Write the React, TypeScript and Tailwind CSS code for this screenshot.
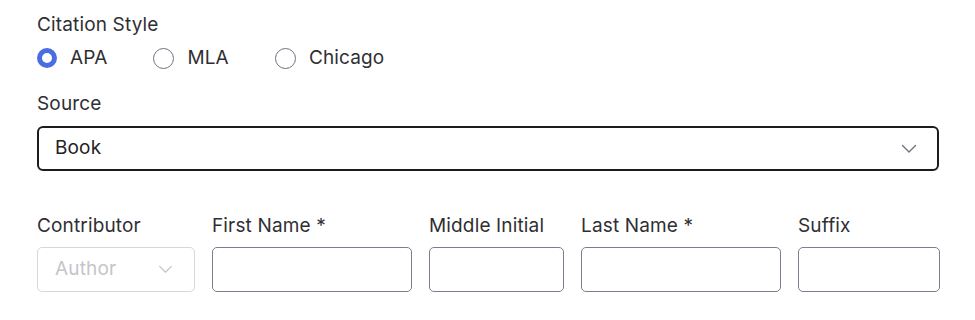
import React from 'react';

const Chevron = ({ className }: { className?: string }) => (
  <svg viewBox="0 0 16 10" className={className} fill="none" stroke="currentColor" strokeWidth="1.4" strokeLinecap="round" strokeLinejoin="round">
    <path d="M1.5 1.5 L8 8 L14.5 1.5" />
  </svg>
);

const Radio = ({ label, checked }: { label: string; checked?: boolean }) => (
  <label className="flex items-center gap-[13px]">
    {checked ? (
      <span className="w-[20px] h-[20px] rounded-full border-[5px] border-[#4a6ee0] bg-white" />
    ) : (
      <span className="w-[21px] h-[21px] rounded-full border-[1.5px] border-[#6e7281] bg-white" />
    )}
    <span>{label}</span>
  </label>
);

const fields = [
  { label: 'First Name *', w: 'w-[200px]' },
  { label: 'Middle Initial', w: 'w-[135px]' },
  { label: 'Last Name *', w: 'w-[200px]' },
  { label: 'Suffix', w: 'w-[142px]' },
];

export default function App() {
  return (
    <div className="bg-white w-[975px] h-[320px] pl-[37px] pr-[36px] pt-[12px] text-[19px] tracking-[0.15px] text-[#2f2f33]" style={{ fontFamily: 'Inter, "Noto Sans", sans-serif' }}>
      <div className="leading-[26px]">Citation Style</div>
      <div className="flex items-center gap-[46px] mt-[7px] h-[26px]">
        <Radio label="APA" checked />
        <Radio label="MLA" />
        <Radio label="Chicago" />
      </div>
      <div className="leading-[26px] mt-[20px]">Source</div>
      <div className="mt-[9px] h-[45px] border-2 border-[#1c1c1e] rounded-[6px] flex items-center justify-between pl-[16px] pr-[20px] text-[#222226]">
        <span>Book</span>
        <Chevron className="w-[16px] h-[10px] text-[#6e7281]" />
      </div>
      <div className="flex gap-[17px] mt-[42px]">
        <div className="flex flex-col">
          <div className="leading-[26px]">Contributor</div>
          <div className="mt-[8px] w-[158px] h-[45px] border border-[#d6d7dc] rounded-[5px] flex items-center justify-between pl-[17px] pr-[21px] text-[#c4c5cb]">
            <span>Author</span>
            <Chevron className="w-[15px] h-[9px] text-[#c4c5cb]" />
          </div>
        </div>
        {fields.map((f) => (
          <div key={f.label} className="flex flex-col">
            <div className="leading-[26px]">{f.label}</div>
            <div className={`mt-[8px] h-[45px] border-[1.5px] border-[#7a7e8d] rounded-[5px] ${f.w}`} />
          </div>
        ))}
      </div>
    </div>
  );
}
